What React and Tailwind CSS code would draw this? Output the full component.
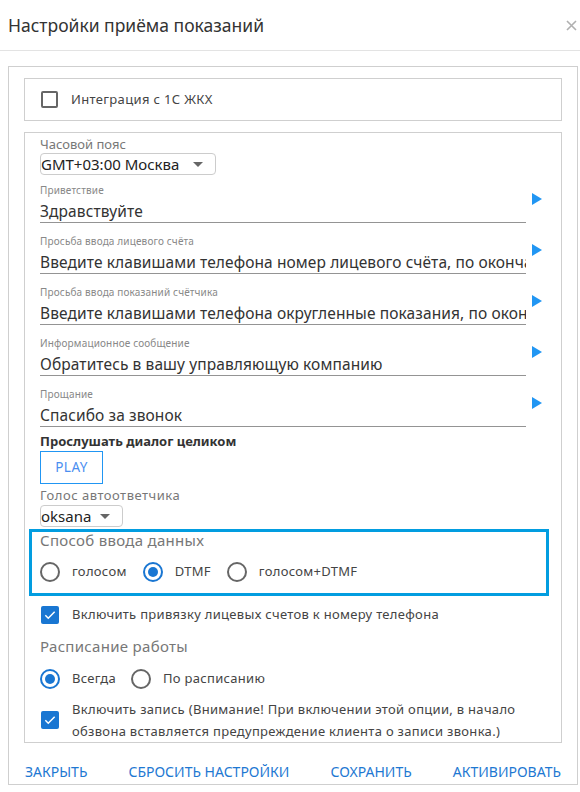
import React from "react";

const fields = [
  { label: "Приветствие", value: "Здравствуйте" },
  {
    label: "Просьба ввода лицевого счёта",
    value: "Введите клавишами телефона номер лицевого счёта, по окончании нажмите решётку",
  },
  {
    label: "Просьба ввода показаний счётчика",
    value: "Введите клавишами телефона округленные показания, по окончании нажмите решётку",
  },
  { label: "Информационное сообщение", value: "Обратитесь в вашу управляющую компанию" },
  { label: "Прощание", value: "Спасибо за звонок" },
];

function Radio({ checked, label }) {
  return (
    <label className="flex items-center">
      <span
        className={
          checked
            ? "w-[20px] h-[20px] rounded-full border-2 border-[#1976d2] flex items-center justify-center"
            : "w-[20px] h-[20px] rounded-full border-2 border-[#666]"
        }
      >
        {checked && <span className="w-[10px] h-[10px] rounded-full bg-[#1976d2]" />}
      </span>
      <span className="ml-[12px] text-[13px] text-[#444] tracking-[0.3px]">{label}</span>
    </label>
  );
}

function Checkbox({ checked }) {
  if (!checked) {
    return <span className="w-[17px] h-[17px] rounded-[2px] border-2 border-[#666] shrink-0" />;
  }
  return (
    <span className="w-[18px] h-[18px] rounded-[2px] bg-[#1976d2] flex items-center justify-center shrink-0">
      <svg width="14" height="14" viewBox="0 0 24 24" fill="none">
        <path d="M4 12.5l5 5L20 6.5" stroke="#fff" strokeWidth="2.6" />
      </svg>
    </span>
  );
}

function Select({ value, width }) {
  return (
    <div
      className={`h-[22px] border border-[#ccc] rounded-[4px] flex items-center justify-between pr-[12px] ${width}`}
    >
      <span className="text-[15px] text-[#222] leading-none">{value}</span>
      <svg width="10" height="5" viewBox="0 0 10 5">
        <path d="M0 0h10L5 5z" fill="#666" />
      </svg>
    </div>
  );
}

export default function App() {
  return (
    <div className="w-[580px] h-[792px] bg-white overflow-hidden font-['Noto_Sans',sans-serif] text-[#333]">
      {/* Header */}
      <div className="h-[51px] border-b border-[#e3e3e3] flex items-center justify-between pl-[8px] pr-[3px]">
        <h1 className="text-[17.5px] text-[#333]">Настройки приёма показаний</h1>
        <svg width="11" height="11" viewBox="0 0 11 11" className="mt-[1px]">
          <path d="M1 1l9 9M10 1l-9 9" stroke="#b0b0b0" strokeWidth="1.6" />
        </svg>
      </div>

      {/* Body */}
      <div className="ml-[8px] mr-[2px] mt-[15px] h-[719px] border border-[#cfcfcf] px-[15px] pt-[11px]">
        <div className="h-[43px] border border-[#cfcfcf] flex items-center pl-[16px]">
          <Checkbox checked={false} />
          <span className="ml-[13px] text-[13px] text-[#444] tracking-[0.35px]">Интеграция с 1С ЖКХ</span>
        </div>

        <div className="mt-[11px] h-[611px] border border-[#cfcfcf] overflow-hidden">
          <div className="pl-[15px]">
            <div className="mt-[3px] text-[13px] leading-[16px] text-[#777]">Часовой пояс</div>
            <div className="mt-[1px]">
              <Select value="GMT+03:00 Москва" width="w-[176px]" />
            </div>

            <div className="mt-[8px]">
              {fields.map((f, i) => (
                <div key={i} className="flex mb-[11px] last:mb-0">
                  <div className="w-[486px]">
                    <div className="h-[14px] text-[10px] leading-[14px] text-[#888] tracking-[0.15px]">
                      {f.label}
                    </div>
                    <div className="mt-[2px] h-[24px] border-b border-[#949494] overflow-hidden whitespace-nowrap text-[15.5px] leading-[24px] text-[#333] tracking-[0.1px]">
                      {f.value}
                    </div>
                  </div>
                  <svg width="10" height="12" viewBox="0 0 10 12" className="ml-[6px] mt-[10px]">
                    <path d="M0 0l10 6L0 12z" fill="#2196f3" />
                  </svg>
                </div>
              ))}
            </div>

            <div className="mt-[6px] text-[13px] leading-[16px] font-bold text-[#333]">
              Прослушать диалог целиком
            </div>
            <button className="mt-[2px] w-[63px] h-[33px] border border-[#2196f3] text-[13.5px] text-[#4a8ef0] tracking-[0.5px]">
              PLAY
            </button>
            <div className="mt-[3px] text-[13px] leading-[16px] text-[#777] tracking-[0.5px]">
              Голос автоответчика
            </div>
            <div className="mt-[2px]">
              <Select value="oksana" width="w-[83px]" />
            </div>
          </div>

          {/* Data input method */}
          <div className="mt-[2px] ml-[4px] w-[520px] h-[67px] border-[3px] border-[#029de0] pl-[8px]">
            <div className="text-[15px] leading-[16px] text-[#777] tracking-[0.3px]">Способ ввода данных</div>
            <div className="mt-[14px] flex items-center gap-[16px]">
              <Radio label="голосом" />
              <Radio checked label="DTMF" />
              <Radio label="голосом+DTMF" />
            </div>
          </div>

          <div className="pl-[15px]">
            <div className="mt-[9px] flex items-center pl-[1px]">
              <Checkbox checked />
              <span className="ml-[13px] text-[13px] text-[#444] tracking-[0.3px]">
                Включить привязку лицевых счетов к номеру телефона
              </span>
            </div>

            <div className="mt-[12px] text-[15px] leading-[18px] text-[#777] tracking-[0.3px]">
              Расписание работы
            </div>
            <div className="mt-[14px] flex items-center gap-[15px]">
              <Radio checked label="Всегда" />
              <Radio label="По расписанию" />
            </div>

            <div className="mt-[9px] flex items-center pl-[1px]">
              <Checkbox checked />
              <span className="ml-[13px] w-[470px] text-[13px] leading-[22px] text-[#444] tracking-[0.3px]">
                Включить запись (Внимание! При включении этой опции, в начало обзвона вставляется
                предупреждение клиента о записи звонка.)
              </span>
            </div>
          </div>
        </div>

        <div className="mt-[18px] flex justify-between pl-[1px] pr-[1px] text-[14px] text-[#1e78d2]">
          <button>ЗАКРЫТЬ</button>
          <button>СБРОСИТЬ НАСТРОЙКИ</button>
          <button>СОХРАНИТЬ</button>
          <button>АКТИВИРОВАТЬ</button>
        </div>
      </div>
    </div>
  );
}
